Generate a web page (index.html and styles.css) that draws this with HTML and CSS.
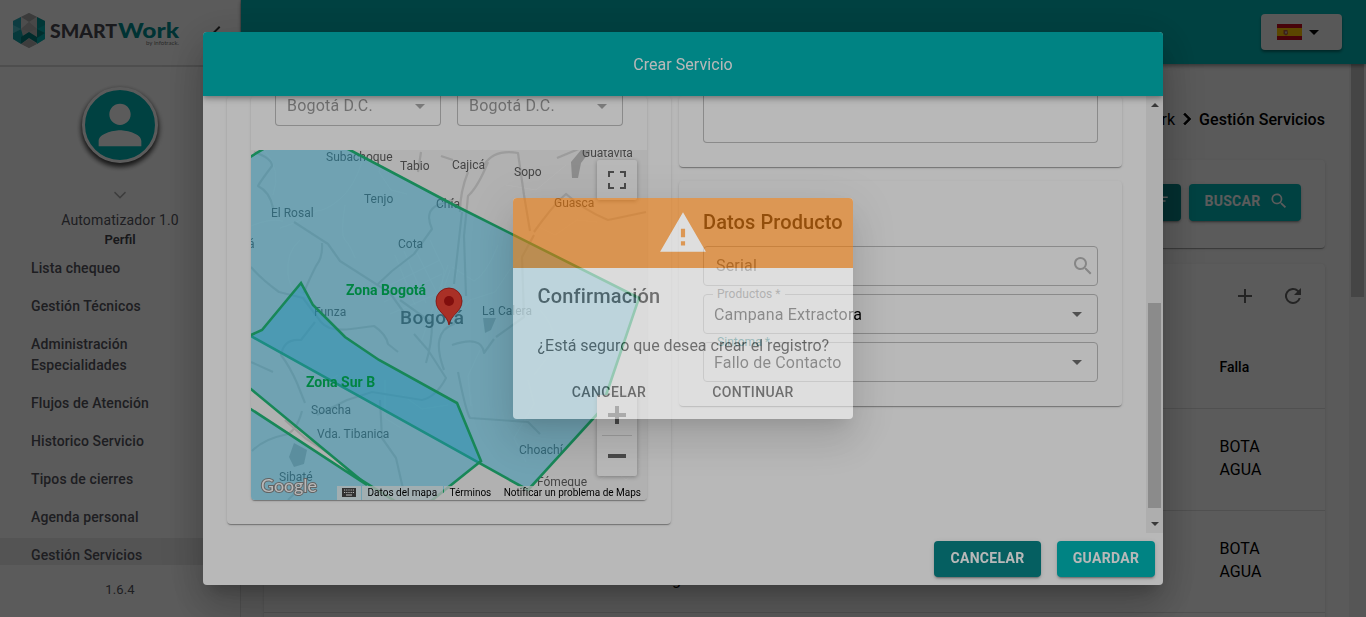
FILE: index.html
```html
<!DOCTYPE html>
<html lang="es">
<head>
<meta charset="utf-8">
<title>Gestión Servicios</title>
<link rel="stylesheet" href="styles.css">
</head>
<body>
<div class="app">
  <aside class="sidebar">
    <div class="brand">
      <svg class="logo" viewBox="0 0 180 50" width="180" height="50">
        <path d="M29 13L45 21V39L29 48L13 39V21Z" fill="#bdbdbd"/>
        <path d="M13 21L21 17V29L13 33Z" fill="#27a9b4"/>
        <path d="M13 33L21 29L23 36L21 44L13 39Z" fill="#12a0a6"/>
        <path d="M13 25L21 29L13 33Z" fill="#4fc0cc"/>
        <path d="M45 21L37 17V29L45 33Z" fill="#009a9a"/>
        <path d="M37 29L45 25V39L37 44Z" fill="#00b0b0"/>
        <path d="M37 29L45 33L37 38Z" fill="#00807f"/>
        <path d="M21 37L29 32L37 37V43L29 38L21 44Z" fill="#007a7a"/>
        <path d="M21 17L29 13L37 17L29 22Z" fill="#a6a6a6"/>
        <path d="M21 17L29 22L21 29Z" fill="#d6d6d6"/>
        <path d="M37 17L29 22L37 29Z" fill="#c9c9c9"/>
        <path d="M21 29L29 22L37 29L29 32Z" fill="#b2b2b2"/>
        <path d="M21 44L29 39L37 44L29 48Z" fill="#aaa"/>
        <text x="50" y="37.500" class="logo-smart" textLength="67" lengthAdjust="spacingAndGlyphs">SMART</text>
        <text x="118" y="37.500" class="logo-work" textLength="61" lengthAdjust="spacingAndGlyphs">Work</text>
        <text x="146" y="45" class="logo-by" textLength="33" lengthAdjust="spacingAndGlyphs">by infotrack.</text>
      </svg>
      <svg class="collapse" viewBox="0 0 24 24" width="24" height="24"><path d="M15.4 7.4L14 6l-6 6 6 6 1.400-1.400L10.800 12z" fill="#333"/></svg>
    </div>
    <div class="profile">
      <div class="avatar"><svg viewBox="0 0 24 24" width="64" height="64"><path d="M12 12c2.210 0 4-1.790 4-4s-1.790-4-4-4-4 1.790-4 4 1.790 4 4 4zm0 2c-2.670 0-8 1.340-8 4v2h16v-2c0-2.660-5.330-4-8-4z" fill="#fff"/></svg></div>
      <svg class="chev" viewBox="0 0 24 24" width="20" height="20"><path d="M6 8.600l6 6 6-6 1.200 1.400-7.200 7.200L4.800 10z" transform="translate(0 -.8)" fill="#aaa"/></svg>
      <div class="user">Automatizador 1.0</div>
      <div class="role">Perfil</div>
    </div>
    <nav class="menu">
      <a>Lista chequeo</a><a>Gestión Técnicos</a><a>Administración<br>Especialidades</a><a>Flujos de Atención</a><a>Historico Servicio</a><a>Tipos de cierres</a><a>Agenda personal</a><a class="active">Gestión Servicios</a>
    </nav>
    <div class="version">1.6.4</div>
  </aside>
  <div class="main">
    <header class="topbar">
      <div class="lang">
        <svg viewBox="0 0 25 16" width="25" height="16"><path d="M0 0h25v16H0z" fill="#c60b1e"/><path d="M0 4h25v8H0z" fill="#ffc400"/><path d="M6.500 6h4l.5 4-2 1.500L6.500 10z" fill="#ad5b3c"/><path d="M8 7.500h2v2H8z" fill="#c9b6b0"/></svg>
        <svg viewBox="0 0 24 24" width="24" height="24"><path d="M7 10l5 5 5-5z"/></svg>
      </div>
    </header>
    <div class="page">
      <div class="crumbs"><span>Smartwork</span><svg viewBox="0 0 24 24" width="24" height="24"><path d="M8.600 7.400L13.200 12l-4.600 4.600L10 18l6-6-6-6z" stroke="#000" stroke-width=".6"/></svg><b>Gestión Servicios</b></div>
      <div class="filters panel">
        <button class="btn dark">FILTROS<svg viewBox="0 0 24 24" width="18" height="18"><path d="M10 18h4v-2h-4zM3 6v2h18V6zm3 7h12v-2H6z" fill="#fff"/></svg></button>
        <button class="btn teal">BUSCAR<svg viewBox="0 0 24 24" width="20" height="20"><path d="M15.500 14h-.8l-.3-.3A6.500 6.500 0 1 0 13.700 14.400l.3.3v.8l5 5 1.500-1.500zm-6 0a4.500 4.500 0 1 1 0-9 4.500 4.500 0 0 1 0 9z" fill="#fff"/></svg></button>
      </div>
      <div class="grid panel">
        <div class="tools">
          <svg viewBox="0 0 24 24" width="24" height="24"><path d="M19 13h-6v6h-2v-6H5v-2h6V5h2v6h6z" fill="#666"/></svg>
          <svg viewBox="0 0 24 24" width="24" height="24"><path d="M17.650 6.350A8 8 0 1 0 19.730 14h-2.080A6 6 0 1 1 12 6c1.660 0 3.140.69 4.220 1.780L13 11h7V4z" fill="#666"/></svg>
        </div>
        <div class="row head"><span></span><b>Falla</b></div>
        <div class="row"><span></span><p>BOTA<br>AGUA</p></div>
        <div class="row"><span class="tail">g</span><p>BOTA<br>AGUA</p></div>
      </div>
    </div>
    <div class="page-scroll"></div>
  </div>
</div>

<div class="backdrop">
  <section class="dialog">
    <h2 class="dialog-title">Crear Servicio</h2>
    <div class="dialog-body">
      <div class="columns">
        <div class="card location">
          <div class="place">
            <div class="selects">
              <div class="select cut">Bogotá D.C.<i class="caret"></i></div>
              <div class="select cut">Bogotá D.C.<i class="caret"></i></div>
            </div>
            <div class="map">
              <svg viewBox="251 150 396 350" width="396" height="350">
                <path d="M251 150h396v350H251z" fill="#f5f5f5"/>
                <g class="minor">
                  <path d="M251 226q18-8 32-5M264 150q18 20 9 45M362 162q-8 25-22 37t-24 12q-18 12-36 17M345 205q-5 30 0 35t10 18M300 240q-14 12-12 34t24 23M385 150l-6 22 12 18 16 4M430 240l14 30-4 30 20 12 10-12 25-8 20-30 14-12M498 245q-12 30-24 36l-22-14M480 350l-12 26 3 30M540 310q22 25 9 45l-15 20M528 380l6 24-20 34 12 24M630 390l-22 20 12 40 20 10M300 370l22 15 16-10M385 380v38l16 10M402 395l20 14 26-4M535 225l20 10 22-15 20 2M600 480l14-10 12 10 14-12M395 255l20 50M404 251l22 52M414 247l24 48M380 290l60-30M384 302l58-28M390 314l56-24M430 330l20-60M440 335l18-66M420 345l28-80M566 165l-30 25-30-5"/>
                </g>
                <g class="roads">
                  <path d="M254 152q18 6 18 14-12 16-14 20 12 6 15 22M294 222l34 22 12 17 50 32 20 28M322 243q1 14-6 23-10 20-12 27M251 267q10 12 28 25l24 6 18 24q8 10 30 7l23-3q12 8 14 18l10 8M315 322l-14 18q-17-2-20 15 9 12 16 28l8 20M251 362l22 10M302 411q-6 22-18 24-20 4-32 16M285 420l20 18 25 16M317 415l30-15 25-8 50 8q14-3 24-22l-18-28-14-16M377 285l15-14 22-17 18-25q-8-18 6-24l16-6M400 300l32 23q0 20-6 40M444 370q-14-38 10-46l8-24M462 212l-8 72M488 162q-10 25-20 34l-4 40 2 60M460 212q0-20 8-40M484 165q10-16 34-12l6 42 6 36M534 235l-12 22 2 60-28 20M534 232q20-28 32-38 18 16 42 26l38-8M452 345q30-10 32 8l10-14M458 372q8 40 12 46l58 4 12 12M380 400l2 38 14 20 8 35M441 156l12 4M557 158l24-10M418 172l3-20M288 500l12-12"/>
                </g>
                <path class="water" d="M571 162l10-12h10l-10 13-3 15h-6zM483 318h13l-5 12-6 3zM294 443l13 7-3 14-10 3-5-10z"/>
                <g class="places">
                  <text x="326" y="161">Subachoque</text><text x="400" y="170">Tabio</text><text x="452" y="169">Cajicá</text><text x="514" y="176">Sopo</text><text x="582" y="157">Guatavita</text><text x="364" y="203">Tenjo</text><text x="271" y="217">El Rosal</text><text x="436" y="208">Chía</text><text x="554" y="207">Guasca</text><text x="398" y="248">Cota</text><text x="248" y="248">á</text><text x="314" y="316">Funza</text><text x="482" y="315">La Calera</text><text x="311" y="414">Soacha</text><text x="317" y="438">Vda. Tibanica</text><text x="279" y="481">Sibaté</text><text x="519" y="454">Choachí</text><text x="537" y="486">Fómeque</text>
                  <text x="400" y="324" class="city">Bogotá</text>
                </g>
                <g class="zones">
                  <path d="M240 163L300 127L350 150L454 205L639 298L601 410L528 490L240 330Z"/>
                  <path d="M240 340L262 330L301 283L313 305L345 337L379 360L457 403L481 461L395 530L240 530L240 402L367 485L240 380Z"/>
                  <path d="M355 476L398 503"/>
                </g>
                <g class="zone-names"><text x="346" y="295">Zona Bogotá</text><text x="306" y="387">Zona Sur B</text></g>
                <path d="M449 325c-2-11-13-13-13-24a13 13 0 0 1 26 0c0 11-11 13-13 24z" fill="#ea4335" stroke="#b31412" stroke-width=".8"/>
                <circle cx="449" cy="301" r="5" fill="#b31412"/>
                <text x="261" y="492" class="google" textLength="56" lengthAdjust="spacingAndGlyphs">Google</text>
              </svg>
              <div class="map-btn full"><svg viewBox="0 0 18 18" width="18" height="18"><path d="M0 0h6v2H2v4H0zM18 0h-6v2h4v4h2zM0 18h6v-2H2v-4H0zM18 18h-6v-2h4v-4h2z" fill="#666"/></svg></div>
              <div class="map-btn zoomer"><svg viewBox="0 0 18 18" width="18" height="18"><path d="M0 7h7V0h4v7h7v4h-7v7H7v-7H0z" fill="#666"/></svg><hr><svg viewBox="0 0 18 18" width="18" height="18"><path d="M0 7h18v4H0z" fill="#666"/></svg></div>
              <div class="credits">
                <span class="keys"><svg viewBox="0 0 14 9" width="14" height="9"><path d="M0 0h14v9H0z" fill="#444"/><path d="M2 2h10M2 4.500h10" stroke="#fff" stroke-dasharray="1.200 1" stroke-width="1.200"/><path d="M4 7h6" stroke="#fff"/></svg></span><span>Datos del mapa</span><span>Términos</span><span>Notificar un problema de Maps</span>
              </div>
            </div>
          </div>
        </div>
        <div class="side">
          <div class="card notes"><div class="textarea"></div></div>
          <div class="card product">
            <h3>Datos Producto</h3>
            <div class="field hint">Serial<svg viewBox="0 0 24 24" width="24" height="24"><path d="M15.500 14h-.8l-.3-.3A6.500 6.500 0 1 0 13.700 14.400l.3.3v.8l5 5 1.500-1.500zm-6 0a4.500 4.500 0 1 1 0-9 4.500 4.500 0 0 1 0 9z" fill="#bababa"/></svg></div>
            <div class="field"><label>Productos *</label>Campana Extractora<i class="caret"></i></div>
            <div class="field"><label class="req">Sintoma *</label>Fallo de Contacto<i class="caret"></i></div>
          </div>
        </div>
      </div>
      <div class="scroll"><i class="up"></i><i class="thumb"></i><i class="down"></i></div>
    </div>
    <div class="dialog-actions"><button class="btn dark">CANCELAR</button><button class="btn teal">GUARDAR</button></div>
  </section>
</div>

<div class="backdrop fading"></div>
<div class="alert-layer">
  <section class="alert">
    <div class="alert-head"><svg viewBox="0 0 24 24" width="50" height="50"><path d="M1 21h22L12 2 1 21zm12-3h-2v-2h2v2zm0-4h-2v-4h2v4z" fill="#fff"/></svg></div>
    <h2>Confirmación</h2>
    <p>¿Está seguro que desea crear el registro?</p>
    <div class="alert-actions"><button>CANCELAR</button><button>CONTINUAR</button></div>
  </section>
</div>
</body>
</html>
```
FILE: styles.css
```css
* { box-sizing: border-box; }
body { margin: 0; font-family: Roboto, sans-serif; font-size: 16px; overflow: hidden; background: #fafafa; color: #000; }
h2, h3, p { margin: 0; font-weight: 500; }
button { font: inherit; color: inherit; border: 0; background: none; padding: 0; letter-spacing: inherit; }
svg { display: block; flex: none; }
.app { display: flex; width: 1366px; height: 617px; isolation: isolate; }

.sidebar { width: 241px; flex: none; background: #fff; border-right: 1px solid #e0e0e0; display: flex; flex-direction: column; align-items: center; color: #55555e; }
.brand { width: 100%; height: 67px; border-bottom: 2px solid #d9d9d9; display: flex; align-items: flex-start; gap: 25px; }
.collapse { margin-top: 20px; }
.logo-smart { font: 900 18.500px Lato, sans-serif; fill: #4a4a52; }
.logo-work { font: 900 20.500px Lato, sans-serif; fill: #008f90; }
.logo-by { font: 6.500px Lato, sans-serif; fill: #777; }
.profile { display: flex; flex-direction: column; align-items: center; padding-top: 20px; height: 183px; }
.avatar { width: 76px; height: 76px; border-radius: 50%; background: #00b6b6; border: 3px solid #fff; display: flex; align-items: center; justify-content: center; box-shadow: 0 3px 5px 1px rgba(0,0,0,.75); }
.chev { margin-top: 22px; }
.user { font-size: 14px; line-height: 22px; margin-top: 4px; letter-spacing: .14px; }
.role { font-size: 13px; font-weight: 600; line-height: 18px; color: #44444c; }
.menu { width: 100%; height: 315px; overflow: hidden; font-size: 14px; font-weight: 500; line-height: 21px; letter-spacing: .12px; }
.menu a { display: block; padding: 8px 0 9px 31px; }
.menu .active { background: #ebebeb; padding-top: 7px; margin-top: 1px; }
.version { font-size: 13px; line-height: 20px; margin-top: 15px; letter-spacing: .1px; }

.main { flex: 1; display: grid; grid-template: 64px 1fr / 1fr 17px; }
.topbar { grid-column: 1 / 3; background: #00b6b6; display: flex; justify-content: flex-end; padding: 14px 24px; box-shadow: 0 2px 4px rgba(0,0,0,.4); z-index: 1; }
.lang { width: 81px; height: 36px; border-radius: 4px; background: #f5f5f5; display: flex; align-items: center; padding-left: 16px; box-shadow: 0 2px 3px rgba(0,0,0,.4); }
.page { padding: 0 24px 0 23px; overflow: hidden; }
.page-scroll { height: 553px; border-left: 2px solid #f1f1f1; border-right: 2px solid #f1f1f1; background: linear-gradient(#c1c1c1 233px, #f1f1f1 233px); }
.crumbs { display: flex; justify-content: flex-end; align-items: center; height: 96px; padding: 14px 0 0; }
.crumbs b { font-weight: 500; letter-spacing: .06px; }
.panel { background: #fff; border-radius: 4px; box-shadow: 0 2px 1px -1px rgba(0,0,0,.2), 0 1px 1px rgba(0,0,0,.14), 0 1px 3px rgba(0,0,0,.12); }
.filters { height: 88px; padding: 24px; display: flex; justify-content: flex-end; gap: 8px; margin-bottom: 16px; }
.btn { height: 36px; border-radius: 4px; color: #fff; font-size: 14px; font-weight: 700; letter-spacing: .3px; display: flex; align-items: center; justify-content: center; box-shadow: 0 3px 1px -2px rgba(0,0,0,.2), 0 2px 2px rgba(0,0,0,.14), 0 1px 5px rgba(0,0,0,.12); padding-bottom: 2px; }
.dark { background: #088487; width: 107px; }
.teal { background: #00b6b6; width: 98px; }
.filters .btn { height: 37px; gap: 8px; padding-bottom: 3px; }
.filters .teal { width: 112px; padding-left: 3px; }
.filters .dark { width: 120px; padding-left: 16px; }
.grid { height: 380px; }
.tools { display: flex; justify-content: flex-end; gap: 24px; padding: 20px 20px 18px; }
.row { height: 102px; border-bottom: 1px solid #e0e0e0; display: grid; grid-template-columns: 955.500px 1fr; align-items: center; line-height: 23px; }
.row.head { height: 83px; }
.row b { font-size: 14px; font-weight: 500; }
.row p { font-weight: 400; margin-top: -4px; }
.tail { padding: 36px 0 0 408px; }

.backdrop, .alert-layer { position: fixed; inset: 0; display: flex; align-items: center; justify-content: center; }
.backdrop { background: rgba(0,0,0,.5); }
.fading { background: rgba(0,0,0,.28); }
.alert-layer { opacity: .54; }
.dialog { width: 960px; height: 553px; border-radius: 4px; background: #fff; overflow: hidden; display: flex; flex-direction: column; }
.dialog, .alert { box-shadow: 0 11px 15px -7px rgba(0,0,0,.2), 0 24px 38px 3px rgba(0,0,0,.14), 0 9px 46px 8px rgba(0,0,0,.12); }
.dialog-title { height: 64px; flex: none; background: #00b6b6; color: #fff; font-size: 16px; font-weight: 400; line-height: 66px; text-align: center; position: relative; z-index: 1; box-shadow: 0 2px 4px -1px rgba(0,0,0,.2), 0 4px 5px rgba(0,0,0,.14), 0 1px 10px rgba(0,0,0,.12); letter-spacing: .05px; }
.dialog-body { display: flex; height: 437px; }
.columns { display: grid; grid-template-columns: 444px 443px; gap: 8px; padding: 0 24px; flex: 1; align-items: start; }
.card, .place { border-radius: 4px; box-shadow: 0 2px 1px -1px rgba(0,0,0,.2), 0 1px 1px rgba(0,0,0,.14), 0 1px 3px rgba(0,0,0,.12); }
.location { padding: 0 24px 24px; height: 428px; }
.place { height: 404px; overflow: hidden; }
.selects { height: 54px; display: grid; grid-template-columns: 1fr 1fr; gap: 16px; padding: 0 24px; }
.select, .field { display: flex; align-items: center; justify-content: space-between; border: 1px solid #bfbfbf; border-radius: 4px; padding: 0 15px 0 10px; letter-spacing: .18px; }
.cut { height: 30px; border-top: 0; border-radius: 0 0 4px 4px; padding: 0 15px 10px 11px; color: #9b9b9b; letter-spacing: .2px; }
.caret { width: 0; height: 0; border: 5px solid transparent; border-top-color: #707070; border-bottom: 0; }
.cut .caret { border-top-color: #ababab; margin-top: 2px; }
.side { display: grid; gap: 14px; }
.notes { height: 71px; padding: 0 24px 24px; }
.textarea { height: 47px; border: 1px solid #bfbfbf; border-top: 0; border-radius: 0 0 4px 4px; }
.product { height: 225px; padding: 24px; display: flex; flex-direction: column; gap: 8px; }
.product h3 { font-size: 20px; line-height: 35px; height: 33px; letter-spacing: .1px; color: #222; }
.field { height: 40px; position: relative; }
.field.hint { color: #777; padding: 0 2px 2px 12px; }
.field.hint svg { margin-top: 2px; }
.field label { position: absolute; left: 9px; top: -8px; padding: 0 4px; font-size: 12px; line-height: 14px; background: #fff; color: #777; letter-spacing: .05px; }
.field .req { color: #339090; }
.scroll { width: 17px; background: #f1f1f1; display: flex; flex-direction: column; align-items: center; }
.up, .down { border: 4px solid transparent; }
.up { border-top: 0; border-bottom-color: #505050; margin: 7px 0 196px; }
.down { border-bottom: 0; border-top-color: #505050; margin-top: 14px; }
.thumb { width: 13px; height: 205px; background: #c1c1c1; }
.dialog-actions { height: 52px; display: flex; justify-content: flex-end; gap: 16px; padding: 8px; }

.map { position: relative; }
.minor { fill: none; stroke: #fff; stroke-width: 1; opacity: .5; }
.roads { fill: none; stroke: #d8d8d8; stroke-width: 2.200; stroke-linejoin: round; }
.water { fill: #c2c2c2; }
.places { font-size: 12px; fill: #606060; }
.city { font-size: 19px; font-weight: 500; letter-spacing: .6px; }
.zones { fill: rgba(46,201,250,.45); stroke: #22bc7a; stroke-width: 2.600; }
.zone-names { font-size: 14px; font-weight: 700; fill: #00b85c; }
.google { font: 18px Lato, sans-serif; fill: #fff; stroke: #8a8a8a; stroke-width: 2; paint-order: stroke; }
.map-btn { position: absolute; right: 10px; width: 40px; background: #fff; border-radius: 2px; box-shadow: 0 1px 4px rgba(0,0,0,.3); display: flex; flex-direction: column; align-items: center; }
.full { top: 10px; height: 40px; justify-content: center; }
.zoomer { bottom: 24px; height: 81px; justify-content: space-between; padding: 11px 0; }
.zoomer hr { width: 30px; margin: 0; border: 0; border-top: 1px solid #d8d8d8; }
.credits { position: absolute; right: 0; bottom: 0; height: 14px; display: flex; font-size: 10px; line-height: 14px; letter-spacing: -.01px; gap: 1px; }
.credits span { background: rgba(245,245,245,.75); padding: 0 6px 0 5.500px; white-space: nowrap; }
.credits .keys { padding: 2px 5px; }

.alert { width: 340px; height: 221px; border-radius: 4px; overflow: hidden; background: #fff; color: #333; }
.alert-head { height: 70px; background: #fb7c00; display: flex; align-items: center; justify-content: center; }
.alert h2 { font-size: 20px; line-height: 24px; padding: 16px 24px 0 24.500px; letter-spacing: .15px; }
.alert p { font-weight: 400; line-height: 24px; padding: 26px 24px 0 24.500px; letter-spacing: 0; white-space: nowrap; }
.alert-actions { display: grid; grid-template-columns: 76px 82px; gap: 65px; padding: 22px 0 0 58px; font-size: 14px; font-weight: 500; line-height: 24px; letter-spacing: .4px; }
```
